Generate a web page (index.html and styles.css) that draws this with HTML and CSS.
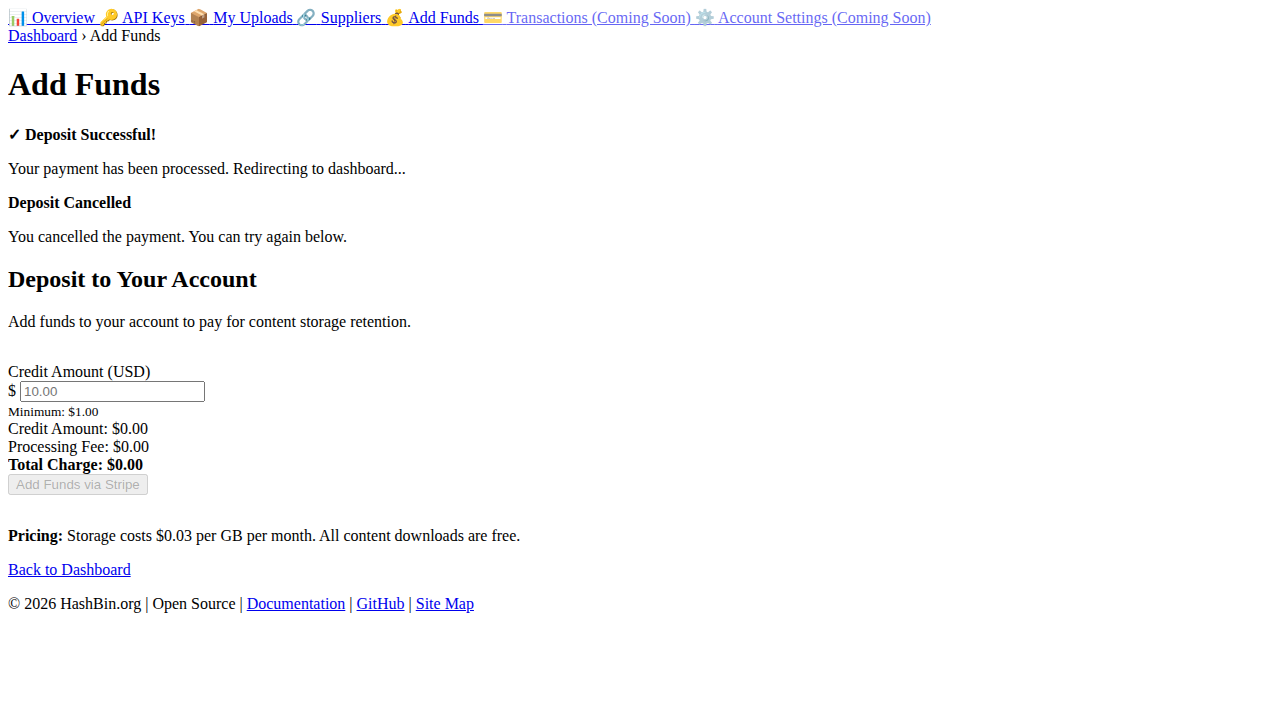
FILE: index.html
```html
<!DOCTYPE html>
<html lang="en">
<head>
    <meta charset="UTF-8" />
    <meta name="viewport" content="width=device-width, initial-scale=1.0" />
    <title>Add Funds - HashBin</title>
    <link rel="stylesheet" href="styles.css">
</head>
<body>

<nav class="dashboard-nav">
    <a href="#">
        <span>📊</span>
        <span>Overview</span>
    </a>
    <a href="#">
        <span>🔑</span>
        <span class="nav-label-wide">API Keys</span>
    </a>
    <a href="#">
        <span>📦</span>
        <span>My Uploads</span>
    </a>
    <a href="#">
        <span>🔗</span>
        <span>Suppliers</span>
    </a>
    <a href="#">
        <span>💰</span>
        <span>Add Funds</span>
    </a>
    <a href="#" class="coming-soon">
        <span>💳</span>
        <span>Transactions (Coming Soon)</span>
    </a>
    <a href="#" class="coming-soon">
        <span>⚙️</span>
        <span>Account Settings (Coming Soon)</span>
    </a>
</nav>

<div class="breadcrumb"><a href="#">Dashboard</a> › Add Funds</div>

<h1>Add Funds</h1>

<div class="alert">
    <p><strong>✓ Deposit Successful!</strong></p>
    <p>Your payment has been processed. Redirecting to dashboard...</p>
</div>

<div class="alert">
    <p><strong>Deposit Cancelled</strong></p>
    <p>You cancelled the payment. You can try again below.</p>
</div>

<h2>Deposit to Your Account</h2>
<p>Add funds to your account to pay for content storage retention.</p>

<form class="deposit-form">
    <div>
        <label for="amount">Credit Amount (USD)</label>
        <div>
            <span>$</span>
            <input type="number" id="amount" placeholder="10.00" min="1" step="0.01" />
        </div>
        <small>Minimum: $1.00</small>
    </div>
    <div>
        <div>Credit Amount: <span id="creditAmount">$0.00</span></div>
        <div>Processing Fee: <span id="processingFee">$0.00</span></div>
        <div><strong>Total Charge: <span id="totalCharge">$0.00</span></strong></div>
    </div>
    <button type="submit" disabled>Add Funds via Stripe</button>
</form>

<p><strong>Pricing:</strong> Storage costs $0.03 per GB per month. All content downloads are free.</p>

<p><a href="#">Back to Dashboard</a></p>

<footer>
    <p>© 2026 HashBin.org | Open Source | <a href="#">Documentation</a> | <a href="#">GitHub</a> | <a href="#">Site Map</a></p>
</footer>

</body>
</html>
```

FILE: styles.css
```css
/* General Styling */
body {
    font-family: "Liberation Serif", "Noto Color Emoji", serif;
}

/* Nav */
.nav-label-wide {
    margin-right: 0.6px;
}

.coming-soon {
    opacity: 0.6;
}

/* Deposit Form */
.deposit-form {
    padding: 16px 0;
}
```
